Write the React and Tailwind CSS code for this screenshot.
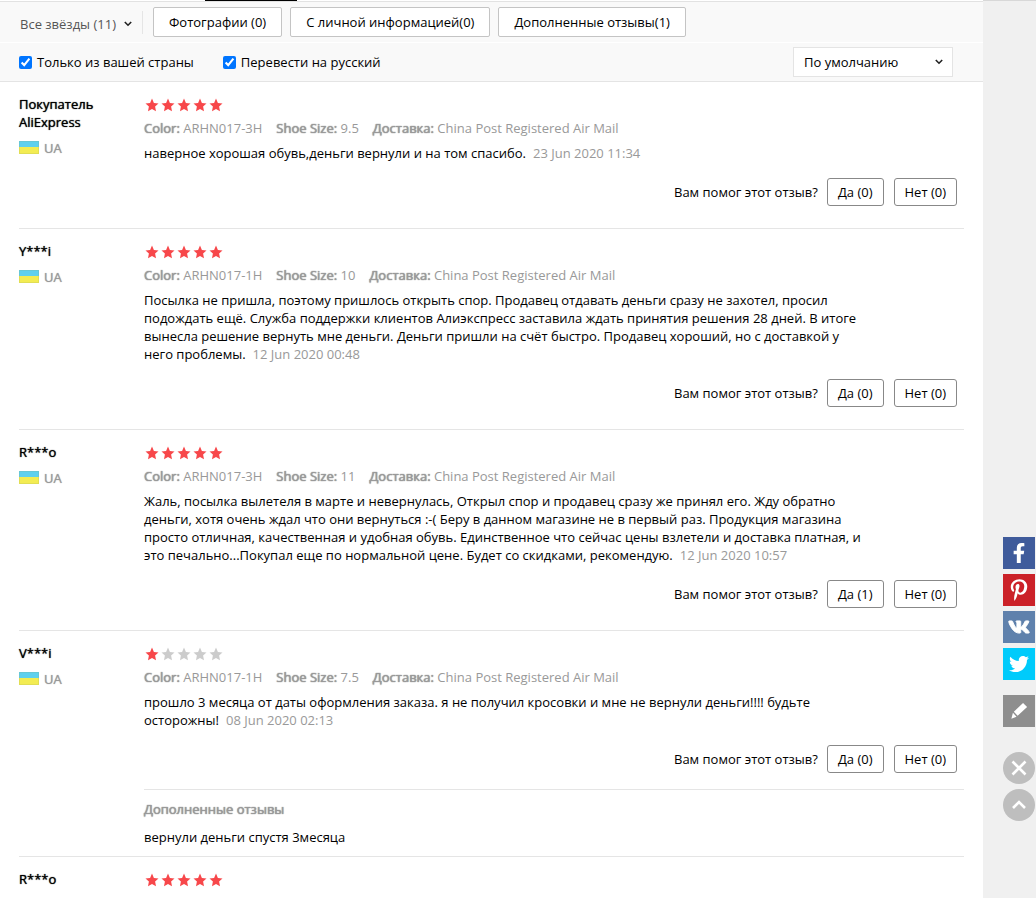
import { useState } from "react";
import { FaFacebookF, FaPinterestP, FaTwitter, FaVk } from "react-icons/fa";

const reviews = [
  {
    id: 1,
    name: "Покупатель AliExpress",
    country: "UA",
    stars: 5,
    color: "ARHN017-3H",
    size: "9.5",
    text: "наверное хорошая обувь,деньги вернули и на том спасибо.",
    date: "23 Jun 2020 11:34",
    yes: 0,
    no: 0,
  },
  {
    id: 2,
    name: "Y***i",
    country: "UA",
    stars: 5,
    color: "ARHN017-1H",
    size: "10",
    text: "Посылка не пришла, поэтому пришлось открыть спор. Продавец отдавать деньги сразу не захотел, просил подождать ещё. Служба поддержки клиентов Алиэкспресс заставила ждать принятия решения 28 дней. В итоге вынесла решение вернуть мне деньги. Деньги пришли на счёт быстро. Продавец хороший, но с доставкой у него проблемы.",
    date: "12 Jun 2020 00:48",
    yes: 0,
    no: 0,
  },
  {
    id: 3,
    name: "R***o",
    country: "UA",
    stars: 5,
    color: "ARHN017-3H",
    size: "11",
    text: "Жаль, посылка вылетеля в марте и невернулась, Открыл спор и продавец сразу же принял его. Жду обратно деньги, хотя очень ждал что они вернуться :-( Беру в данном магазине не в первый раз. Продукция магазина просто отличная, качественная и удобная обувь. Единственное что сейчас цены взлетели и доставка платная, и это печально...Покупал еще по нормальной цене. Будет со скидками, рекомендую.",
    date: "12 Jun 2020 10:57",
    yes: 1,
    no: 0,
  },
  {
    id: 4,
    name: "V***i",
    country: "UA",
    stars: 1,
    color: "ARHN017-1H",
    size: "7.5",
    text: "прошло 3 месяца от даты оформления заказа. я не получил кросовки и мне не вернули деньги!!!! будьте осторожны!",
    date: "08 Jun 2020 02:13",
    yes: 0,
    no: 0,
    extra: "вернули деньги спустя 3месяца",
  },
  { id: 5, name: "R***o", stars: 5 },
];

const filters = ["Фотографии (0)", "С личной информацией(0)", "Дополненные отзывы(1)"];

export default function App() {
  return (
    <div className="flex h-screen overflow-hidden bg-[#f0f0f0] font-['Open_Sans',sans-serif] text-[13px] leading-[18px] text-black">
      <main className="min-w-0 flex-1 bg-white">
        <div className="border-b border-[#e2e2e2]">
          <div className="ml-[205px] h-px w-[92px] bg-black"></div>
        </div>
        <Filters />
        <div className="px-[19px]">
          {reviews.map((r) => (
            <Review key={r.id} review={r} />
          ))}
        </div>
      </main>
      <div className="w-[53px] shrink-0 border-t border-[#d8d8d8]"></div>
      <ShareBar />
    </div>
  );
}

function Filters() {
  const [local, setLocal] = useState(true);
  const [translate, setTranslate] = useState(true);

  return (
    <section>
      <div className="flex h-10 items-center bg-[#f9f9f9] pl-5">
        <div className="border-r border-[#e5e5e5] pt-[3px]">
          <div className="relative">
            <select aria-label="Оценка" className="block h-5 w-[122px] appearance-none text-[#555] outline-none">
              <option>Все звёзды (11)</option>
            </select>
            <Chevron className="right-[10px]" />
          </div>
        </div>
        <div className="ml-[10px] flex gap-2">
          {filters.map((f) => (
            <button key={f} className="h-[30px] rounded-[2px] border border-[#c4c4c4] bg-white px-[15px]">
              {f}
            </button>
          ))}
        </div>
      </div>
      <div className="mt-px flex h-[39px] items-center border-b border-[#e4e4e4] bg-[#f9f9f9] pr-[30px] pl-[19px]">
        <label className="flex items-center gap-[5px]">
          <input type="checkbox" checked={local} onChange={(e) => setLocal(e.target.checked)} />
          Только из вашей страны
        </label>
        <label className="ml-[29px] flex items-center gap-[5px]">
          <input type="checkbox" checked={translate} onChange={(e) => setTranslate(e.target.checked)} />
          Перевести на русский
        </label>
        <div className="relative ml-auto">
          <select
            aria-label="Сортировка"
            className="h-[30px] w-40 appearance-none border border-[#e4e4e4] bg-white pl-[10px] outline-none"
          >
            <option>По умолчанию</option>
          </select>
          <Chevron className="right-[10px]" />
        </div>
      </div>
    </section>
  );
}

function Review({ review }) {
  const { name, country, stars, color, size, text, date, yes, no, extra } = review;
  return (
    <article className="flex border-b border-[#e5e5e5] pt-[13px] last:border-b-0">
      <div className="w-[125px] shrink-0 pr-6">
        <h3 className="[text-shadow:0_0_1px_currentColor]">{name}</h3>
        {country && (
          <div className="mt-2 flex items-center gap-[5px] text-[#999] [text-shadow:0_0_1px_currentColor]">
            <Flag />
            {country}
          </div>
        )}
      </div>
      <div className="min-w-0 flex-1">
        <Stars value={stars} />
        {text && (
          <>
            <div className="mt-[6px] flex gap-[14px] text-[#999]">
              <Property label="Color:" value={color} />
              <Property label="Shoe Size:" value={size} />
              <Property label="Доставка:" value="China Post Registered Air Mail" />
            </div>
            <p className="mt-[7px] pr-[100px]">
              {text}
              <time className="ml-[7px] text-[#999]">{date}</time>
            </p>
            <div className={`mt-4 flex items-center justify-end pr-[7px] ${extra ? "mb-4" : "mb-[22px]"}`}>
              <span className="mr-[9px]">Вам помог этот отзыв?</span>
              <button className="h-7 rounded-[3px] border border-[#888] px-[10px]">Да ({yes})</button>
              <button className="ml-[10px] h-7 rounded-[3px] border border-[#888] px-[10px]">Нет ({no})</button>
            </div>
          </>
        )}
        {extra && (
          <div className="border-t border-[#e5e5e5] py-[10px]">
            <h4 className="text-[#999] [text-shadow:0_0_1px_currentColor,0_0_1px_currentColor]">Дополненные отзывы</h4>
            <p className="mt-[10px]">{extra}</p>
          </div>
        )}
      </div>
    </article>
  );
}

function Property({ label, value }) {
  return (
    <span>
      <b className="font-normal [text-shadow:0_0_1px_currentColor,0_0_1px_currentColor]">{label}</b> {value}
    </span>
  );
}

function Stars({ value }) {
  return (
    <div className="flex h-[18px] items-center gap-[2px] pt-[2px] pl-px">
      {[1, 2, 3, 4, 5].map((n) => (
        <svg key={n} viewBox="0 0 14 14" className={`size-[14px] ${n <= value ? "fill-[#f7474a]" : "fill-[#ccc]"}`}>
          <path d="M7 .6 8.9 4.9 13.5 5.4 10.1 8.6 11 13.2 7 10.9 3 13.2 3.9 8.6.5 5.4 5.1 4.9Z" />
        </svg>
      ))}
    </div>
  );
}

function Flag() {
  return (
    <svg viewBox="0 0 20 14" className="h-[14px] w-5">
      <rect width="20" height="13" fill="#5fd0ee" />
      <rect y="6" width="20" height="7" fill="#f3ec52" />
      <rect x=".5" y=".5" width="19" height="12" fill="none" stroke="#8a9a60" strokeOpacity=".35" strokeDasharray="1 1" />
    </svg>
  );
}

function Chevron({ className }) {
  return (
    <svg
      viewBox="0 0 8 6"
      className={`pointer-events-none absolute top-1/2 h-[6px] w-2 -translate-y-1/2 ${className}`}
      fill="none"
      stroke="#222"
      strokeWidth="1.6"
    >
      <path d="m.8 1 3.2 3.2L7.2 1" />
    </svg>
  );
}

function ShareBar() {
  return (
    <nav className="fixed right-px bottom-[77px] flex w-8 flex-col gap-[5px] text-white">
      <a href="#facebook" aria-label="Facebook" className="flex size-8 items-center justify-center bg-[#3f5b9b]">
        <FaFacebookF className="size-5" />
      </a>
      <a href="#pinterest" aria-label="Pinterest" className="flex size-8 items-center justify-center bg-[#cb2128]">
        <FaPinterestP className="size-[22px]" />
      </a>
      <a href="#vk" aria-label="VK" className="flex size-8 items-center justify-center bg-[#5f81ac]">
        <FaVk className="size-[22px] stroke-current stroke-[24]" />
      </a>
      <a href="#twitter" aria-label="Twitter" className="flex size-8 items-center justify-center bg-[#00cbfb]">
        <FaTwitter className="size-5" />
      </a>
      <button aria-label="Написать" className="mt-[10px] flex size-8 items-center justify-center bg-[#8e8e8e]">
        <svg viewBox="0 0 16 16" className="size-[18px]" fill="currentColor">
          <path d="m11.6.8 3.6 3.6-8.4 7.8-3.4-3.6ZM2.6 9.6l3.2 3.4-4.6 1.8Z" />
        </svg>
      </button>
      <button aria-label="Закрыть" className="mt-5 flex size-8 items-center justify-center rounded-full bg-[#bebebe]">
        <svg viewBox="0 0 16 16" className="size-4" fill="none" stroke="currentColor" strokeWidth="2.6">
          <path d="m1.5 1.5 13 13M14.5 1.5l-13 13" />
        </svg>
      </button>
      <button aria-label="Наверх" className="flex size-8 items-center justify-center rounded-full bg-[#bebebe]">
        <svg viewBox="0 0 16 16" className="size-4" fill="none" stroke="currentColor" strokeWidth="2.6">
          <path d="m2 11 6-6 6 6" />
        </svg>
      </button>
    </nav>
  );
}
